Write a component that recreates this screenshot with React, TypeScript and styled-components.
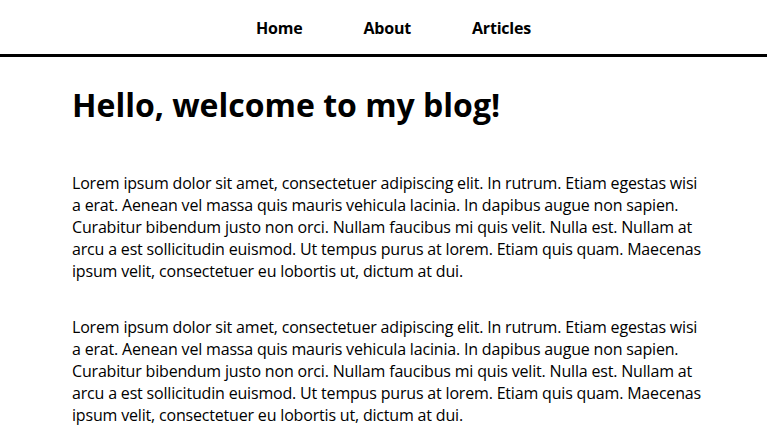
import React from "react";
import styled, { createGlobalStyle } from "styled-components";

const GlobalStyle = createGlobalStyle`
  html, body {
    margin: 0;
    padding: 0;
    background: #ffffff;
  }
  body {
    font-family: "Open Sans", "Noto Sans", sans-serif;
    color: #000000;
  }
`;

const NavBar = styled.nav`
  display: flex;
  justify-content: center;
  align-items: center;
  padding: 17px 0 15px;
  border-bottom: 3px solid #000000;
`;

const NavList = styled.ul`
  display: flex;
  gap: 61px;
  margin: 0;
  padding: 0 0 0 20px;
  list-style: none;
`;

const NavLink = styled.a`
  font-size: 16px;
  font-weight: 700;
  line-height: 22px;
  letter-spacing: -0.2px;
  color: #000000;
  text-decoration: none;
`;

const Main = styled.main`
  padding: 26px 0 0 72px;
`;

const Article = styled.article`
  max-width: 634px;
`;

const Title = styled.h1`
  margin: 0 0 45px;
  font-size: 32px;
  font-weight: 700;
  line-height: 44px;
  letter-spacing: 0;
`;

const Paragraph = styled.p`
  margin: 0;
  font-size: 16px;
  line-height: 22px;
  letter-spacing: -0.18px;

  & + & {
    margin-top: 34px;
  }
`;

const lorem =
  "Lorem ipsum dolor sit amet, consectetuer adipiscing elit. In rutrum. Etiam egestas wisi a erat. Aenean vel massa quis mauris vehicula lacinia. In dapibus augue non sapien. Curabitur bibendum justo non orci. Nullam faucibus mi quis velit. Nulla est. Nullam at arcu a est sollicitudin euismod. Ut tempus purus at lorem. Etiam quis quam. Maecenas ipsum velit, consectetuer eu lobortis ut, dictum at dui.";

const links = ["Home", "About", "Articles"];

export default function App() {
  return (
    <>
      <GlobalStyle />
      <NavBar>
        <NavList>
          {links.map((l) => (
            <li key={l}>
              <NavLink href="#">{l}</NavLink>
            </li>
          ))}
        </NavList>
      </NavBar>
      <Main>
        <Article>
          <Title>Hello, welcome to my blog!</Title>
          <Paragraph>{lorem}</Paragraph>
          <Paragraph>{lorem}</Paragraph>
        </Article>
      </Main>
    </>
  );
}
